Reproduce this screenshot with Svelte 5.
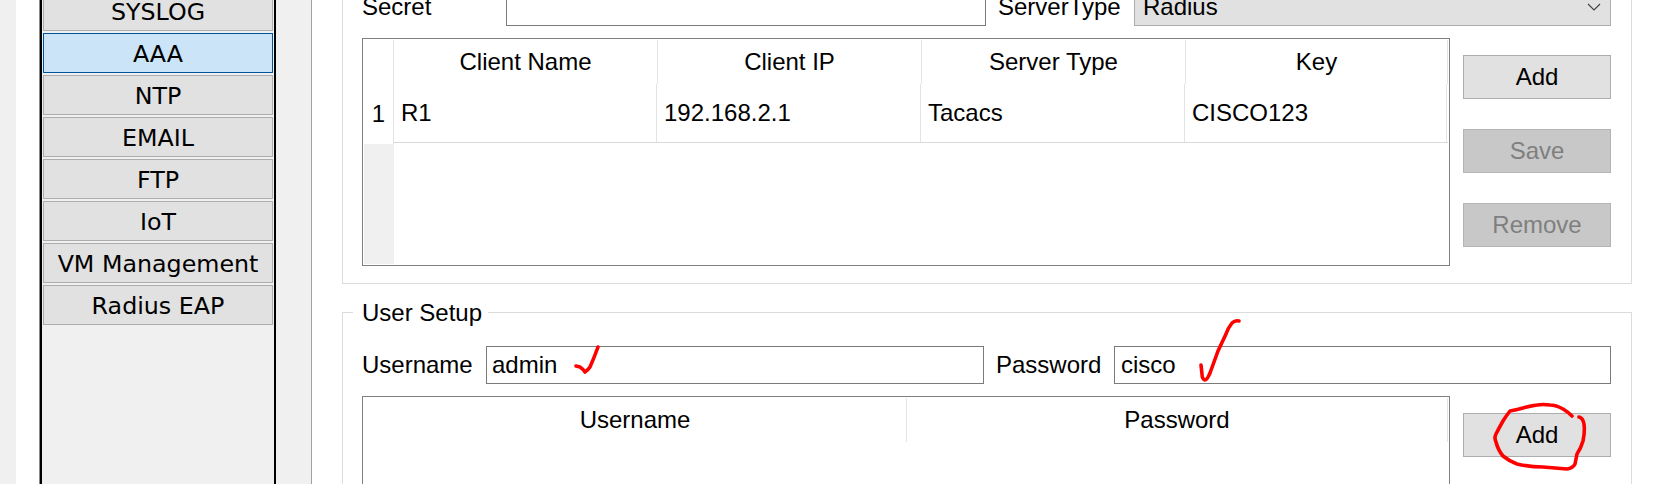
<script>
  const navItems = ['SYSLOG', 'AAA', 'NTP', 'EMAIL', 'FTP', 'IoT', 'VM Management', 'Radius EAP'];
  const clients = [{ name: 'R1', ip: '192.168.2.1', type: 'Tacacs', key: 'CISCO123' }];
</script>

<div class="page">
  <div class="strip"></div>

  <aside class="side">
    <nav class="nav">
      {#each navItems as item}
        <button class="nav-btn" class:active={item === 'AAA'}>{item}</button>
      {/each}
    </nav>
  </aside>

  <main class="main">
    <section class="panel first">
      <div class="form-row">
        <span class="label secret">Secret</span>
        <input class="field secret-field" />
        <span class="label">ServerType</span>
        <div class="select">
          <span>Radius</span>
          <svg width="14" height="8" viewBox="0 0 14 8"><path d="M1 1l6 6 6-6" fill="none" stroke="#444" stroke-width="1.2" /></svg>
        </div>
      </div>

      <div class="body">
        <div class="table">
          <div class="row-heads">
            <div class="corner"></div>
            <div class="row-num">1</div>
            <div class="row-rest"></div>
          </div>
          <div class="cols">
            <div class="head">
              <div class="th">Client Name</div>
              <div class="th">Client IP</div>
              <div class="th">Server Type</div>
              <div class="th last">Key</div>
            </div>
            {#each clients as c}
              <div class="data">
                <div class="td first-td">{c.name}</div>
                <div class="td">{c.ip}</div>
                <div class="td">{c.type}</div>
                <div class="td last-td">{c.key}</div>
              </div>
            {/each}
          </div>
        </div>
        <div class="actions">
          <button class="btn">Add</button>
          <button class="btn off">Save</button>
          <button class="btn off">Remove</button>
        </div>
      </div>
    </section>

    <fieldset class="panel second">
      <legend>User Setup</legend>
      <div class="form-row">
        <span class="label user-label">Username</span>
        <input class="field user-field" value="admin" />
        <span class="label">Password</span>
        <input class="field pass-field" value="cisco" />
      </div>

      <div class="body">
        <div class="table">
          <div class="cols">
            <div class="head">
              <div class="th user-th">Username</div>
              <div class="th pass-th">Password</div>
            </div>
          </div>
        </div>
        <div class="actions">
          <button class="btn">Add</button>
        </div>
      </div>
    </fieldset>
  </main>

  <!-- red pen marks drawn on top of the screenshot -->
  <svg class="marks" width="1673" height="484" viewBox="0 0 1673 484">
    <path d="M576 366 L580 367 Q583 369 585 372 Q588 370 590 367 Q594 358 598 347" />
    <path d="M1239 321 Q1235 320 1232 323 Q1228 328 1226 334 L1218 351 Q1214 362 1210 373 Q1207 380 1205 380 Q1202 379 1202 374 L1201 365" />
    <path d="M1572 416 Q1568 412 1563 409 Q1556 405 1550 405 Q1543 404 1537 405 Q1530 406 1523 408 Q1516 410 1510 411 Q1506 416 1503 421 Q1499 428 1496 434 Q1494 438 1496 442 Q1498 450 1503 456 Q1509 461 1517 464 Q1530 467 1543 467 Q1555 468 1567 469 Q1573 468 1575 464 Q1576 459 1577 454 Q1581 448 1583 441 Q1585 432 1584 424 Q1583 418 1579 417" />
  </svg>
</div>

<style>
  :global(body) {
    margin: 0;
    background: #fff;
  }

  .page {
    position: relative;
    display: flex;
    height: 484px;
    overflow: hidden;
    background: #fff;
    color: #000;
    font-family: "Liberation Sans", Arial, sans-serif;
    font-size: 24px;
  }

  .strip {
    width: 16px;
    background: #f0f0f0;
  }

  .side {
    box-sizing: border-box;
    display: flex;
    width: 273px;
    margin-left: 23px;
    background: #f0f0f0;
    border-left: 1px solid #8a8a8a;
    border-right: 1px solid #a0a0a0;
  }

  .nav {
    box-sizing: border-box;
    display: flex;
    flex-direction: column;
    gap: 2px;
    width: 236px;
    margin-top: -9px;
    padding: 0 1px;
    border-left: 2px solid #000;
    border-right: 2px solid #000;
  }

  .nav-btn {
    height: 40px;
    padding: 2px 0 0;
    background: #e1e1e1;
    border: 1px solid #adadad;
    font-family: "DejaVu Sans", sans-serif;
    font-size: 23.75px;
    color: #000;
  }

  .nav-btn.active {
    background: #cce4f7;
    border-color: #005499;
  }

  .main {
    flex: 1;
    padding: 0 41px 0 30px;
  }

  .panel {
    box-sizing: border-box;
    width: 1290px;
    margin: 0;
    padding: 0 20px 0 19px;
    border: 1px solid #dcdcdc;
  }

  .first {
    margin-top: -13px;
    padding-bottom: 17px;
  }

  .second {
    margin-top: 15px;
    min-width: 0;
  }

  legend {
    margin-left: -9px;
    padding: 0 6px 0 9px;
    line-height: 27px;
  }

  .form-row {
    display: flex;
    align-items: center;
  }

  .second .form-row {
    margin-top: 20px;
  }

  .label {
    white-space: nowrap;
  }

  .secret {
    width: 144px;
  }

  .user-label {
    width: 124px;
  }

  .field {
    box-sizing: border-box;
    height: 38px;
    padding: 0 6px;
    background: #fff;
    border: 1px solid #7a7a7a;
    border-radius: 0;
    outline: none;
    font: inherit;
    color: #000;
  }

  .secret-field {
    width: 480px;
    margin-right: 12px;
  }

  .user-field {
    width: 498px;
    margin-right: 12px;
    padding-left: 5px;
  }

  .pass-field {
    width: 497px;
    margin-left: auto;
  }

  .select {
    box-sizing: border-box;
    display: flex;
    align-items: center;
    justify-content: space-between;
    width: 477px;
    height: 38px;
    margin-left: auto;
    padding: 0 9px 0 8px;
    background: #e1e1e1;
    border: 1px solid #adadad;
  }

  .body {
    display: flex;
    gap: 13px;
    margin-top: 12px;
  }

  .table {
    box-sizing: border-box;
    display: flex;
    width: 1088px;
    height: 228px;
    padding: 1px;
    background: #fff;
    border: 1px solid #808080;
  }

  .row-heads {
    display: flex;
    flex-direction: column;
    width: 30px;
  }

  .corner {
    height: 44px;
    border-right: 1px solid #e4e4e4;
  }

  .row-num {
    display: flex;
    align-items: center;
    justify-content: center;
    height: 60px;
    border-right: 1px solid #e4e4e4;
  }

  .row-rest {
    flex: 1;
    background: #f0f0f0;
  }

  .cols {
    flex: 1;
    min-width: 0;
  }

  .head {
    display: flex;
    height: 44px;
  }

  .th {
    box-sizing: border-box;
    display: flex;
    align-items: center;
    justify-content: center;
    width: 264px;
    border-right: 1px solid #e4e4e4;
  }

  .th.last {
    flex: 1;
  }

  .user-th {
    width: 543px;
  }

  .pass-th {
    flex: 1;
  }

  .data {
    display: flex;
    box-sizing: border-box;
    height: 59px;
    border-bottom: 1px solid #d8d8d8;
  }

  .td {
    box-sizing: border-box;
    display: flex;
    align-items: center;
    width: 264px;
    padding-left: 7px;
    border-right: 1px solid #e4e4e4;
  }

  .first-td {
    width: 263px;
  }

  .last-td {
    width: 262px;
  }

  .actions {
    display: flex;
    flex-direction: column;
    gap: 30px;
    margin-top: 17px;
  }

  .btn {
    width: 148px;
    height: 44px;
    padding: 0;
    background: #e1e1e1;
    border: 1px solid #adadad;
    font: inherit;
    color: #000;
  }

  .btn.off {
    background: #c8c8c8;
    border-color: #b4b4b4;
    color: #7f7f7f;
  }

  .marks {
    position: absolute;
    top: 0;
    left: 0;
    pointer-events: none;
  }

  .marks path {
    fill: none;
    stroke: #f00;
    stroke-width: 3.6;
    stroke-linecap: round;
    stroke-linejoin: round;
  }
</style>
